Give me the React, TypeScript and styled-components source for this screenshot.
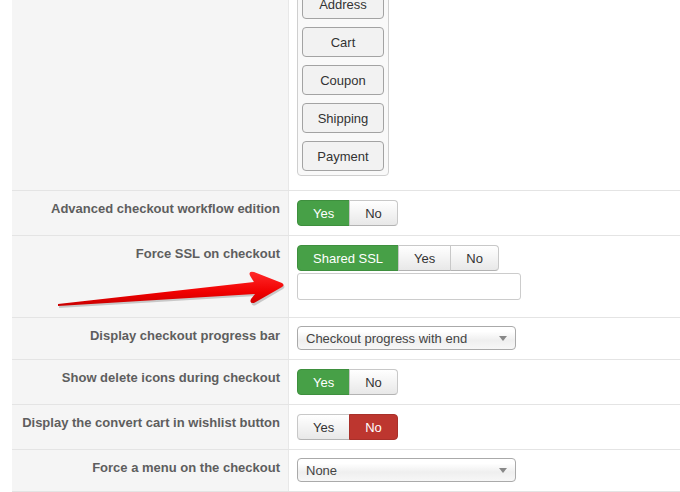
import React from 'react'
import styled, { createGlobalStyle, css } from 'styled-components'

const GlobalStyle = createGlobalStyle`
  html, body {
    margin: 0;
    padding: 0;
    background: #fff;
    overflow: hidden;
  }
  body {
    font-family: "Liberation Sans", Arial, sans-serif;
    font-size: 13px;
    color: #333;
  }
`

const Page = styled.div`
  position: relative;
  width: 680px;
  height: 492px;
  overflow: hidden;
`

const Table = styled.div`
  margin-top: -25px;
  padding-left: 12px;
`

const Row = styled.div`
  display: grid;
  grid-template-columns: 277px 1fr;
  border-bottom: 1px solid #e4e4e4;
`

const Label = styled.div`
  background: #f5f5f5;
  border-right: 1px solid #e8e8e8;
  padding: 9px 8px 9px 8px;
  text-align: right;
  font-weight: bold;
  font-size: 13px;
  line-height: 18px;
  color: #5e5e5e;
`

const Value = styled.div<{ $top?: number; $bottom?: number }>`
  padding: ${p => (p.$top != null ? p.$top : 9)}px 8px
    ${p => (p.$bottom != null ? p.$bottom : 9)}px 8px;
  display: flex;
  flex-direction: column;
  align-items: flex-start;
`

const StepBox = styled.div`
  display: flex;
  flex-direction: column;
  gap: 8px;
  padding: 4px;
  border: 1px solid #cfcfcf;
  border-radius: 4px;
  background: #f9f9f9;
`

const StepButton = styled.div`
  width: 80px;
  height: 28px;
  border: 1px solid #a3a3a3;
  border-radius: 4px;
  background: #f2f2f2;
  display: flex;
  align-items: center;
  justify-content: center;
  font-size: 13px;
  color: #333;
`

const Group = styled.div`
  display: flex;
`

const Toggle = styled.div<{ $state?: 'on' | 'off' }>`
  height: 24px;
  padding: 0 15px;
  display: flex;
  align-items: center;
  font-size: 13px;
  color: #333;
  border: 1px solid #c8c8c8;
  border-bottom-color: #b3b3b3;
  margin-left: -1px;
  background: linear-gradient(#ffffff, #e8e8e8);
  &:first-child {
    margin-left: 0;
    border-radius: 4px 0 0 4px;
  }
  &:last-child {
    border-radius: 0 4px 4px 0;
  }
  ${p =>
    p.$state === 'on' &&
    css`
      background: #47a047;
      border-color: #3e8f3e;
      color: #fff;
    `}
  ${p =>
    p.$state === 'off' &&
    css`
      background: #bd362f;
      border-color: #a8302a;
      color: #fff;
    `}
`

const TextInput = styled.div`
  margin-top: 2px;
  width: 222px;
  height: 25px;
  border: 1px solid #ccc;
  border-radius: 3px;
  background: #fff;
`

const Select = styled.div`
  position: relative;
  width: 209px;
  height: 22px;
  padding-left: 8px;
  border: 1px solid #aaa;
  border-radius: 4px;
  background: linear-gradient(#ffffff 20%, #efefef 60%, #f7f7f7);
  display: flex;
  align-items: center;
  font-size: 13px;
  color: #444;
`

const Caret = styled.span`
  position: absolute;
  right: 8px;
  top: 9px;
  width: 0;
  height: 0;
  border-left: 4px solid transparent;
  border-right: 4px solid transparent;
  border-top: 5px solid #888;
`

const ArrowLayer = styled.svg`
  position: absolute;
  left: 0;
  top: 0;
  pointer-events: none;
`

const RedArrow = () => (
  <ArrowLayer width="680" height="492" viewBox="0 0 680 492">
    <defs>
      <linearGradient id="arrowFill" x1="0" y1="0" x2="0" y2="1">
        <stop offset="0" stopColor="#ff2a2a" />
        <stop offset="0.6" stopColor="#f00000" />
        <stop offset="1" stopColor="#c80000" />
      </linearGradient>
    </defs>
    <path
      d="M58,306.5 L255,294.5 L251,299 Q249,304 254,304 L282,287.5 Q285,285 282,283 L254,272.5 Q248,271 250,276 L254,282.5 L58,304 Z"
      fill="#000"
      opacity="0.18"
      transform="translate(1,1.5)"
    />
    <path
      d="M58,306 L255,294 L251,299 Q249,303.5 254,303 L282,287 Q285,285 282,283 L254,272 Q248,270.5 250,275.5 L254,282 L58,304 Z"
      fill="url(#arrowFill)"
    />
  </ArrowLayer>
)

const steps = ['Address', 'Cart', 'Coupon', 'Shipping', 'Payment']

const App = () => {
  return (
    <Page>
      <GlobalStyle />
      <Table>
        <Row>
          <Label />
          <Value $bottom={14}>
            <StepBox>
              {steps.map(s => (
                <StepButton key={s}>{s}</StepButton>
              ))}
            </StepBox>
          </Value>
        </Row>
        <Row>
          <Label>Advanced checkout workflow edition</Label>
          <Value>
            <Group>
              <Toggle $state="on">Yes</Toggle>
              <Toggle>No</Toggle>
            </Group>
          </Value>
        </Row>
        <Row>
          <Label>Force SSL on checkout</Label>
          <Value $bottom={17}>
            <Group>
              <Toggle $state="on">Shared SSL</Toggle>
              <Toggle>Yes</Toggle>
              <Toggle>No</Toggle>
            </Group>
            <TextInput />
          </Value>
        </Row>
        <Row>
          <Label>Display checkout progress bar</Label>
          <Value $top={8}>
            <Select>
              Checkout progress with end
              <Caret />
            </Select>
          </Value>
        </Row>
        <Row>
          <Label>Show delete icons during checkout</Label>
          <Value>
            <Group>
              <Toggle $state="on">Yes</Toggle>
              <Toggle>No</Toggle>
            </Group>
          </Value>
        </Row>
        <Row>
          <Label>Display the convert cart in wishlist button</Label>
          <Value>
            <Group>
              <Toggle>Yes</Toggle>
              <Toggle $state="off">No</Toggle>
            </Group>
          </Value>
        </Row>
        <Row>
          <Label>Force a menu on the checkout</Label>
          <Value $top={8}>
            <Select>
              None
              <Caret />
            </Select>
          </Value>
        </Row>
      </Table>
      <RedArrow />
    </Page>
  )
}

export default App
